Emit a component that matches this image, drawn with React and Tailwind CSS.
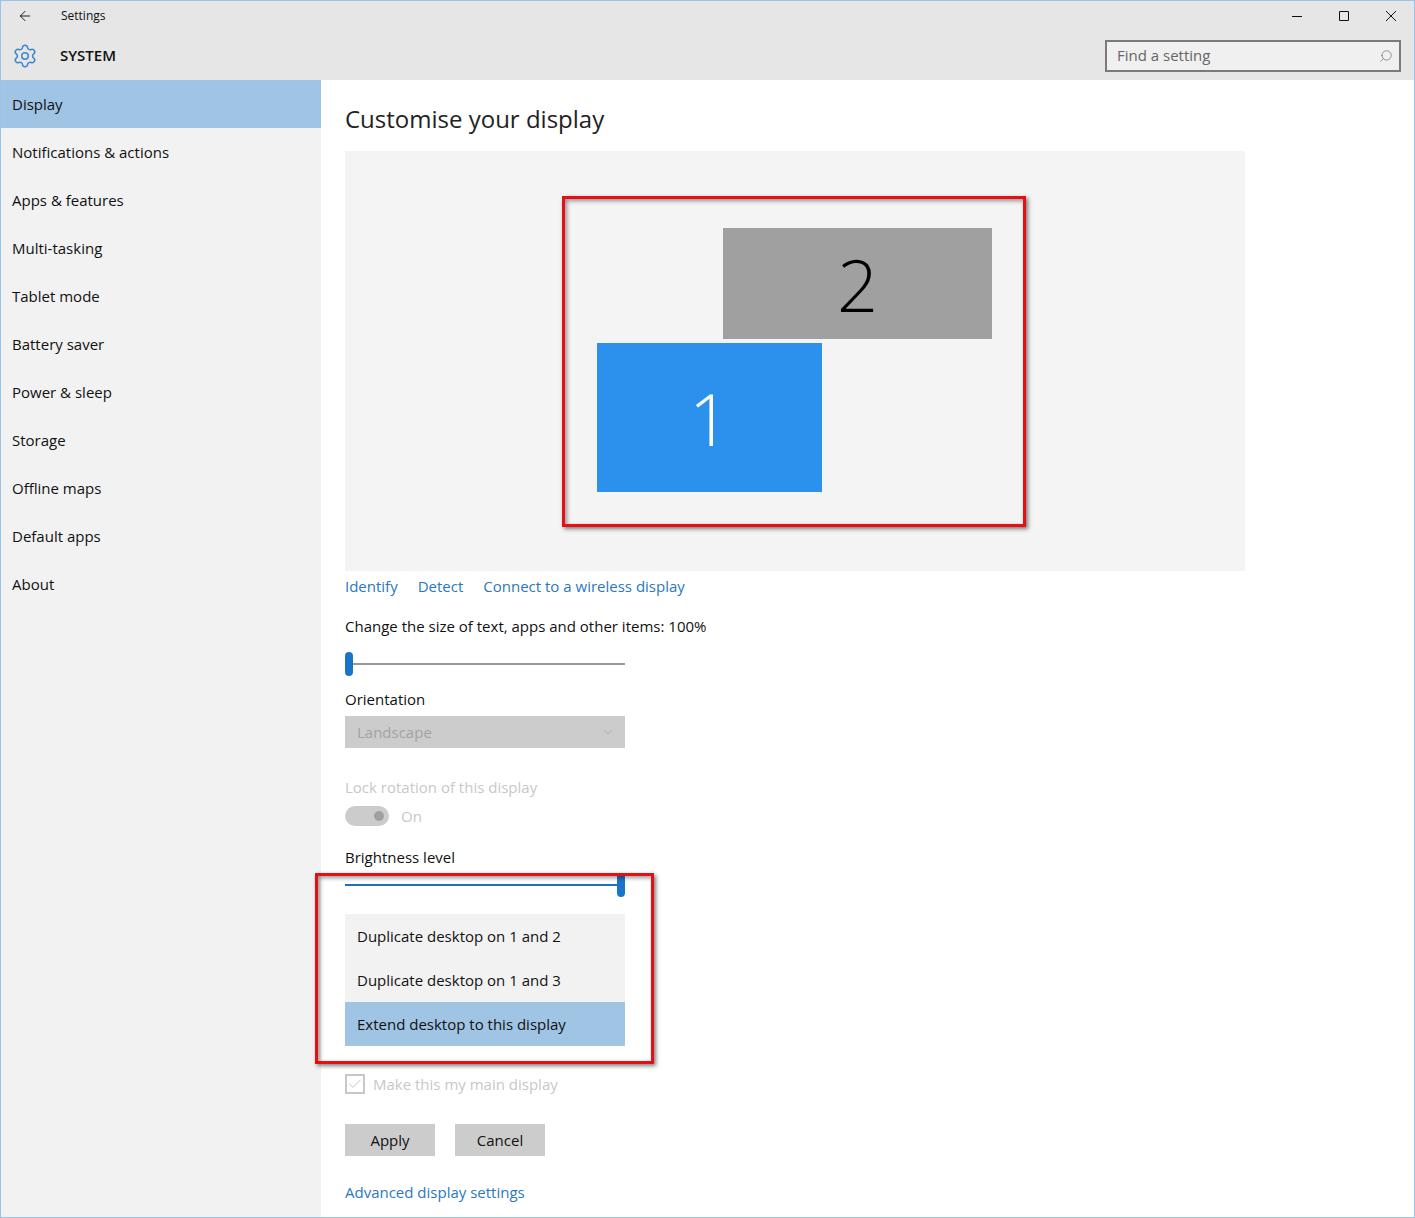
import React from 'react';
import { ArrowLeft, Settings, Search, ChevronDown, Check } from 'lucide-react';

const navItems = [
  'Display',
  'Notifications & actions',
  'Apps & features',
  'Multi-tasking',
  'Tablet mode',
  'Battery saver',
  'Power & sleep',
  'Storage',
  'Offline maps',
  'Default apps',
  'About',
];

function Slider({ full }) {
  return (
    <div className="relative h-6 w-[280px] flex items-center">
      <div className={`h-0.5 w-full ${full ? 'bg-[#1f6fc0]' : 'bg-[#999999]'}`} />
      <div className={`absolute top-0 w-2 h-6 rounded-full bg-[#1c74c8] ${full ? 'right-0' : 'left-0'}`} />
    </div>
  );
}

export default function App() {
  return (
    <div
      className="relative w-[1415px] h-[1218px] overflow-hidden border border-[#9cc3e6] bg-white text-[15px] text-[#111111]"
      style={{ fontFamily: '"Open Sans", "Noto Sans", sans-serif' }}
    >
      <header className="h-[79px] bg-[#e6e6e6] flex flex-col">
        <div className="h-[30px] flex items-center pl-4 pr-3">
          <ArrowLeft className="w-4 h-4 mr-[28px]" strokeWidth={1.4} />
          <span className="text-xs">Settings</span>
          <div className="ml-auto flex items-center gap-[35px] pr-[5px]">
            <svg width="12" height="12" viewBox="0 0 12 12"><path d="M1 6.5h10" stroke="#111" fill="none" /></svg>
            <svg width="12" height="12" viewBox="0 0 12 12"><path d="M1.5 1.5h9v9h-9z" stroke="#111" fill="none" /></svg>
            <svg width="12" height="12" viewBox="0 0 12 12"><path d="M1 1l10 10M11 1L1 11" stroke="#111" fill="none" /></svg>
          </div>
        </div>
        <div className="flex-1 flex items-center pl-[11px] pr-[13px]">
          <Settings className="w-[26px] h-[26px] text-[#3f87cb] mr-[22px]" strokeWidth={1.4} />
          <span className="text-[15px] font-semibold">SYSTEM</span>
          <div className="ml-auto w-[296px] h-8 border-2 border-[#7a7a7a] bg-[#f0f0f0] flex items-center justify-between pl-[10px] pr-[6px] text-[#666666]">
            <span>Find a setting</span>
            <Search className="w-[14px] h-[14px] -scale-x-100 text-[#777777]" strokeWidth={1.3} />
          </div>
        </div>
      </header>

      <div className="flex h-[1137px]">
        <nav className="w-[320px] shrink-0 bg-[#f2f2f2]">
          {navItems.map((item, i) => (
            <div key={item} className={`h-12 flex items-center pl-[11px] ${i === 0 ? 'bg-[#a0c4e4]' : ''}`}>
              {item}
            </div>
          ))}
        </nav>

        <main className="relative flex-1 pl-6">
          <h1 className="h-[71px] pt-[20px] text-[24px] leading-[38px] font-normal text-[#222222]">Customise your display</h1>

          <div className="relative w-[900px] h-[420px] bg-[#f4f4f4]">
            <div className="absolute left-[378px] top-[77px] w-[269px] h-[111px] bg-[#a0a0a0] flex items-center justify-center text-[72px] font-light text-black">2</div>
            <div className="absolute left-[252px] top-[192px] w-[225px] h-[149px] bg-[#2b91ed] flex items-center justify-center text-[72px] font-light text-white">1</div>
          </div>

          <div className="h-[30px] flex items-center gap-5 text-[#2b78bf]">
            <span>Identify</span>
            <span>Detect</span>
            <span>Connect to a wireless display</span>
          </div>

          <div className="mt-[10px] h-[30px] flex items-center">Change the size of text, apps and other items: 100%</div>
          <div className="mt-[11px]"><Slider /></div>

          <div className="mt-[11px] h-[24px] flex items-center">Orientation</div>
          <div className="mt-[5px] w-[280px] h-8 bg-[#cccccc] flex items-center justify-between pl-3 pr-[9px] text-[#a3a3a3]">
            <span>Landscape</span>
            <ChevronDown className="w-4 h-4" strokeWidth={1} />
          </div>

          <div className="mt-[27px] h-6 flex items-center text-[#c8c8c8]">Lock rotation of this display</div>
          <div className="mt-[7px] h-5 flex items-center gap-3 text-[#c8c8c8]">
            <div className="w-11 h-5 rounded-full bg-[#cccccc] flex items-center justify-end pr-[5px]">
              <div className="w-[10px] h-[10px] rounded-full bg-[#a0a0a0]" />
            </div>
            <span>On</span>
          </div>

          <div className="mt-[19px] h-6 flex items-center">Brightness level</div>
          <div className="mt-[4px]"><Slider full /></div>

          <div className="mt-[17px] w-[280px] bg-[#f2f2f2]">
            <div className="h-11 flex items-center pl-3">Duplicate desktop on 1 and 2</div>
            <div className="h-11 flex items-center pl-3">Duplicate desktop on 1 and 3</div>
            <div className="h-11 flex items-center pl-3 bg-[#a0c4e4]">Extend desktop to this display</div>
          </div>

          <div className="mt-7 h-5 flex items-center gap-2 text-[#c8c8c8]">
            <div className="w-5 h-5 border-2 border-[#c8c8c8] flex items-center justify-center">
              <Check className="w-4 h-4" strokeWidth={1.5} />
            </div>
            <span>Make this my main display</span>
          </div>

          <div className="mt-[30px] flex gap-5">
            <div className="w-[90px] h-8 bg-[#cccccc] flex items-center justify-center">Apply</div>
            <div className="w-[90px] h-8 bg-[#cccccc] flex items-center justify-center">Cancel</div>
          </div>

          <div className="mt-[24px] h-6 flex items-center text-[#2b78bf]">Advanced display settings</div>
        </main>
      </div>

      <div className="absolute left-[561px] top-[195px] w-[464px] h-[331px] border-[3px] border-[#e60f14] shadow-[2px_2px_4px_rgba(0,0,0,0.5),inset_2px_2px_4px_rgba(0,0,0,0.4)]" />
      <div className="absolute left-[314px] top-[872px] w-[339px] h-[191px] border-[3px] border-[#e60f14] shadow-[2px_2px_4px_rgba(0,0,0,0.5),inset_2px_2px_4px_rgba(0,0,0,0.4)]" />
    </div>
  );
}
